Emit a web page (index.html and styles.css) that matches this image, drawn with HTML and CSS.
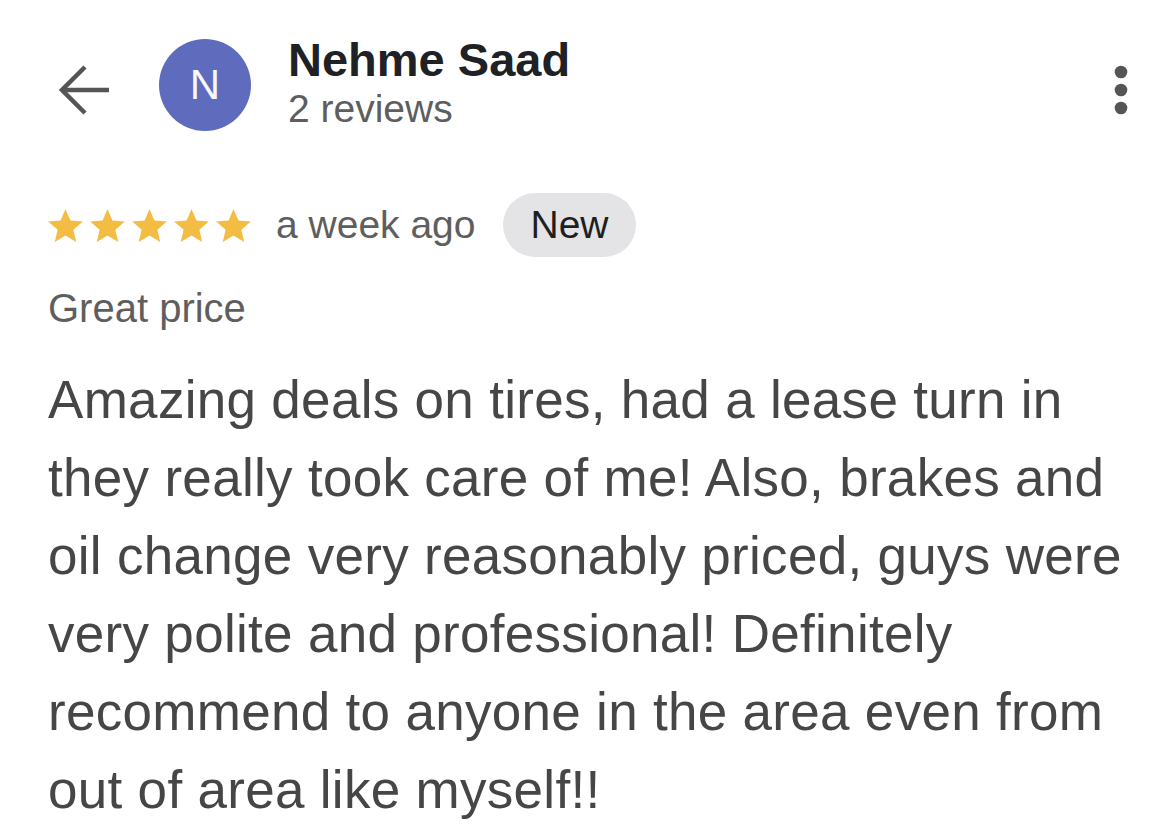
FILE: index.html
```html
<!DOCTYPE html>
<html lang="en">
<head>
<meta charset="utf-8">
<title>Nehme Saad review</title>
<link rel="stylesheet" href="styles.css">
</head>
<body>
<div class="page">
  <header class="header">
    <svg class="back" width="52" height="52" viewBox="0 0 52 52" aria-hidden="true">
      <path d="M50 26H4" fill="none" stroke="#555" stroke-width="4.5"/>
      <path d="M26 3L3 26L26 49" fill="none" stroke="#555" stroke-width="4.5" stroke-linejoin="miter"/>
    </svg>
    <div class="avatar">N</div>
    <div class="who">
      <div class="name">Nehme Saad</div>
      <div class="count">2 reviews</div>
    </div>
    <svg class="more" width="14" height="50" viewBox="0 0 14 50" aria-hidden="true">
      <circle cx="7" cy="7" r="6.3" fill="#555"/>
      <circle cx="7" cy="25" r="6.3" fill="#555"/>
      <circle cx="7" cy="43" r="6.3" fill="#555"/>
    </svg>
  </header>

  <div class="meta">
    <div class="stars">
      <svg class="star" width="35" height="33" viewBox="2 2 20 19"><path d="M12 17.27L18.18 21l-1.64-7.03L22 9.24l-7.19-.61L12 2 9.19 8.63 2 9.24l5.46 4.73L5.82 21z"/></svg>
      <svg class="star" width="35" height="33" viewBox="2 2 20 19"><path d="M12 17.27L18.18 21l-1.64-7.03L22 9.24l-7.19-.61L12 2 9.19 8.63 2 9.24l5.46 4.73L5.82 21z"/></svg>
      <svg class="star" width="35" height="33" viewBox="2 2 20 19"><path d="M12 17.27L18.18 21l-1.64-7.03L22 9.24l-7.19-.61L12 2 9.19 8.63 2 9.24l5.46 4.73L5.82 21z"/></svg>
      <svg class="star" width="35" height="33" viewBox="2 2 20 19"><path d="M12 17.27L18.18 21l-1.64-7.03L22 9.24l-7.19-.61L12 2 9.19 8.63 2 9.24l5.46 4.73L5.82 21z"/></svg>
      <svg class="star" width="35" height="33" viewBox="2 2 20 19"><path d="M12 17.27L18.18 21l-1.64-7.03L22 9.24l-7.19-.61L12 2 9.19 8.63 2 9.24l5.46 4.73L5.82 21z"/></svg>
    </div>
    <span class="when">a week ago</span>
    <span class="badge">New</span>
  </div>

  <div class="topic">Great price</div>

  <p class="body">Amazing deals on tires, had a lease turn in they really took care of me! Also, brakes and oil change very reasonably priced, guys were very polite and professional! Definitely recommend to anyone in the area even from out of area like myself!!</p>
</div>
</body>
</html>
```

FILE: styles.css
```css
html, body {
  margin: 0;
  padding: 0;
  background: #ffffff;
}

body {
  font-family: "Liberation Sans", Arial, sans-serif;
  width: 1163px;
  height: 826px;
  overflow: hidden;
}

.page {
  padding: 0 20px 0 48px;
}

.header {
  display: flex;
  align-items: flex-start;
  padding-top: 35px;
}

.back {
  flex: none;
  margin-left: 11px;
  margin-top: 29px;
}

.avatar {
  flex: none;
  width: 92px;
  height: 92px;
  margin-left: 48px;
  margin-top: 4px;
  border-radius: 50%;
  background: #5f6bbd;
  color: #f7f7fb;
  font-size: 42px;
  line-height: 92px;
  text-align: center;
}

.who {
  margin-left: 37px;
}

.name {
  font-size: 47px;
  font-weight: 700;
  line-height: 50px;
  color: #202124;
}

.count {
  font-size: 39px;
  line-height: 47px;
  color: #5e5e5e;
}

.more {
  flex: none;
  margin-left: auto;
  margin-right: 15px;
  margin-top: 30px;
}

.meta {
  display: flex;
  align-items: center;
  height: 64px;
  margin-top: 61px;
}

.stars {
  display: flex;
  gap: 7px;
}

.star {
  display: block;
  fill: #f2bd42;
}

.when {
  margin-left: 25px;
  font-size: 39px;
  color: #5e5e5e;
}

.badge {
  margin-left: 28px;
  height: 64px;
  padding: 0 27px;
  border-radius: 32px;
  background: #e4e4e6;
  color: #1f1f1f;
  font-size: 39px;
  line-height: 64px;
}

.topic {
  margin-top: 27px;
  font-size: 40px;
  line-height: 48px;
  color: #5e5e5e;
}

.body {
  margin: 29px 0 0;
  font-size: 53px;
  line-height: 78px;
  letter-spacing: 0.3px;
  color: #464646;
}
```
